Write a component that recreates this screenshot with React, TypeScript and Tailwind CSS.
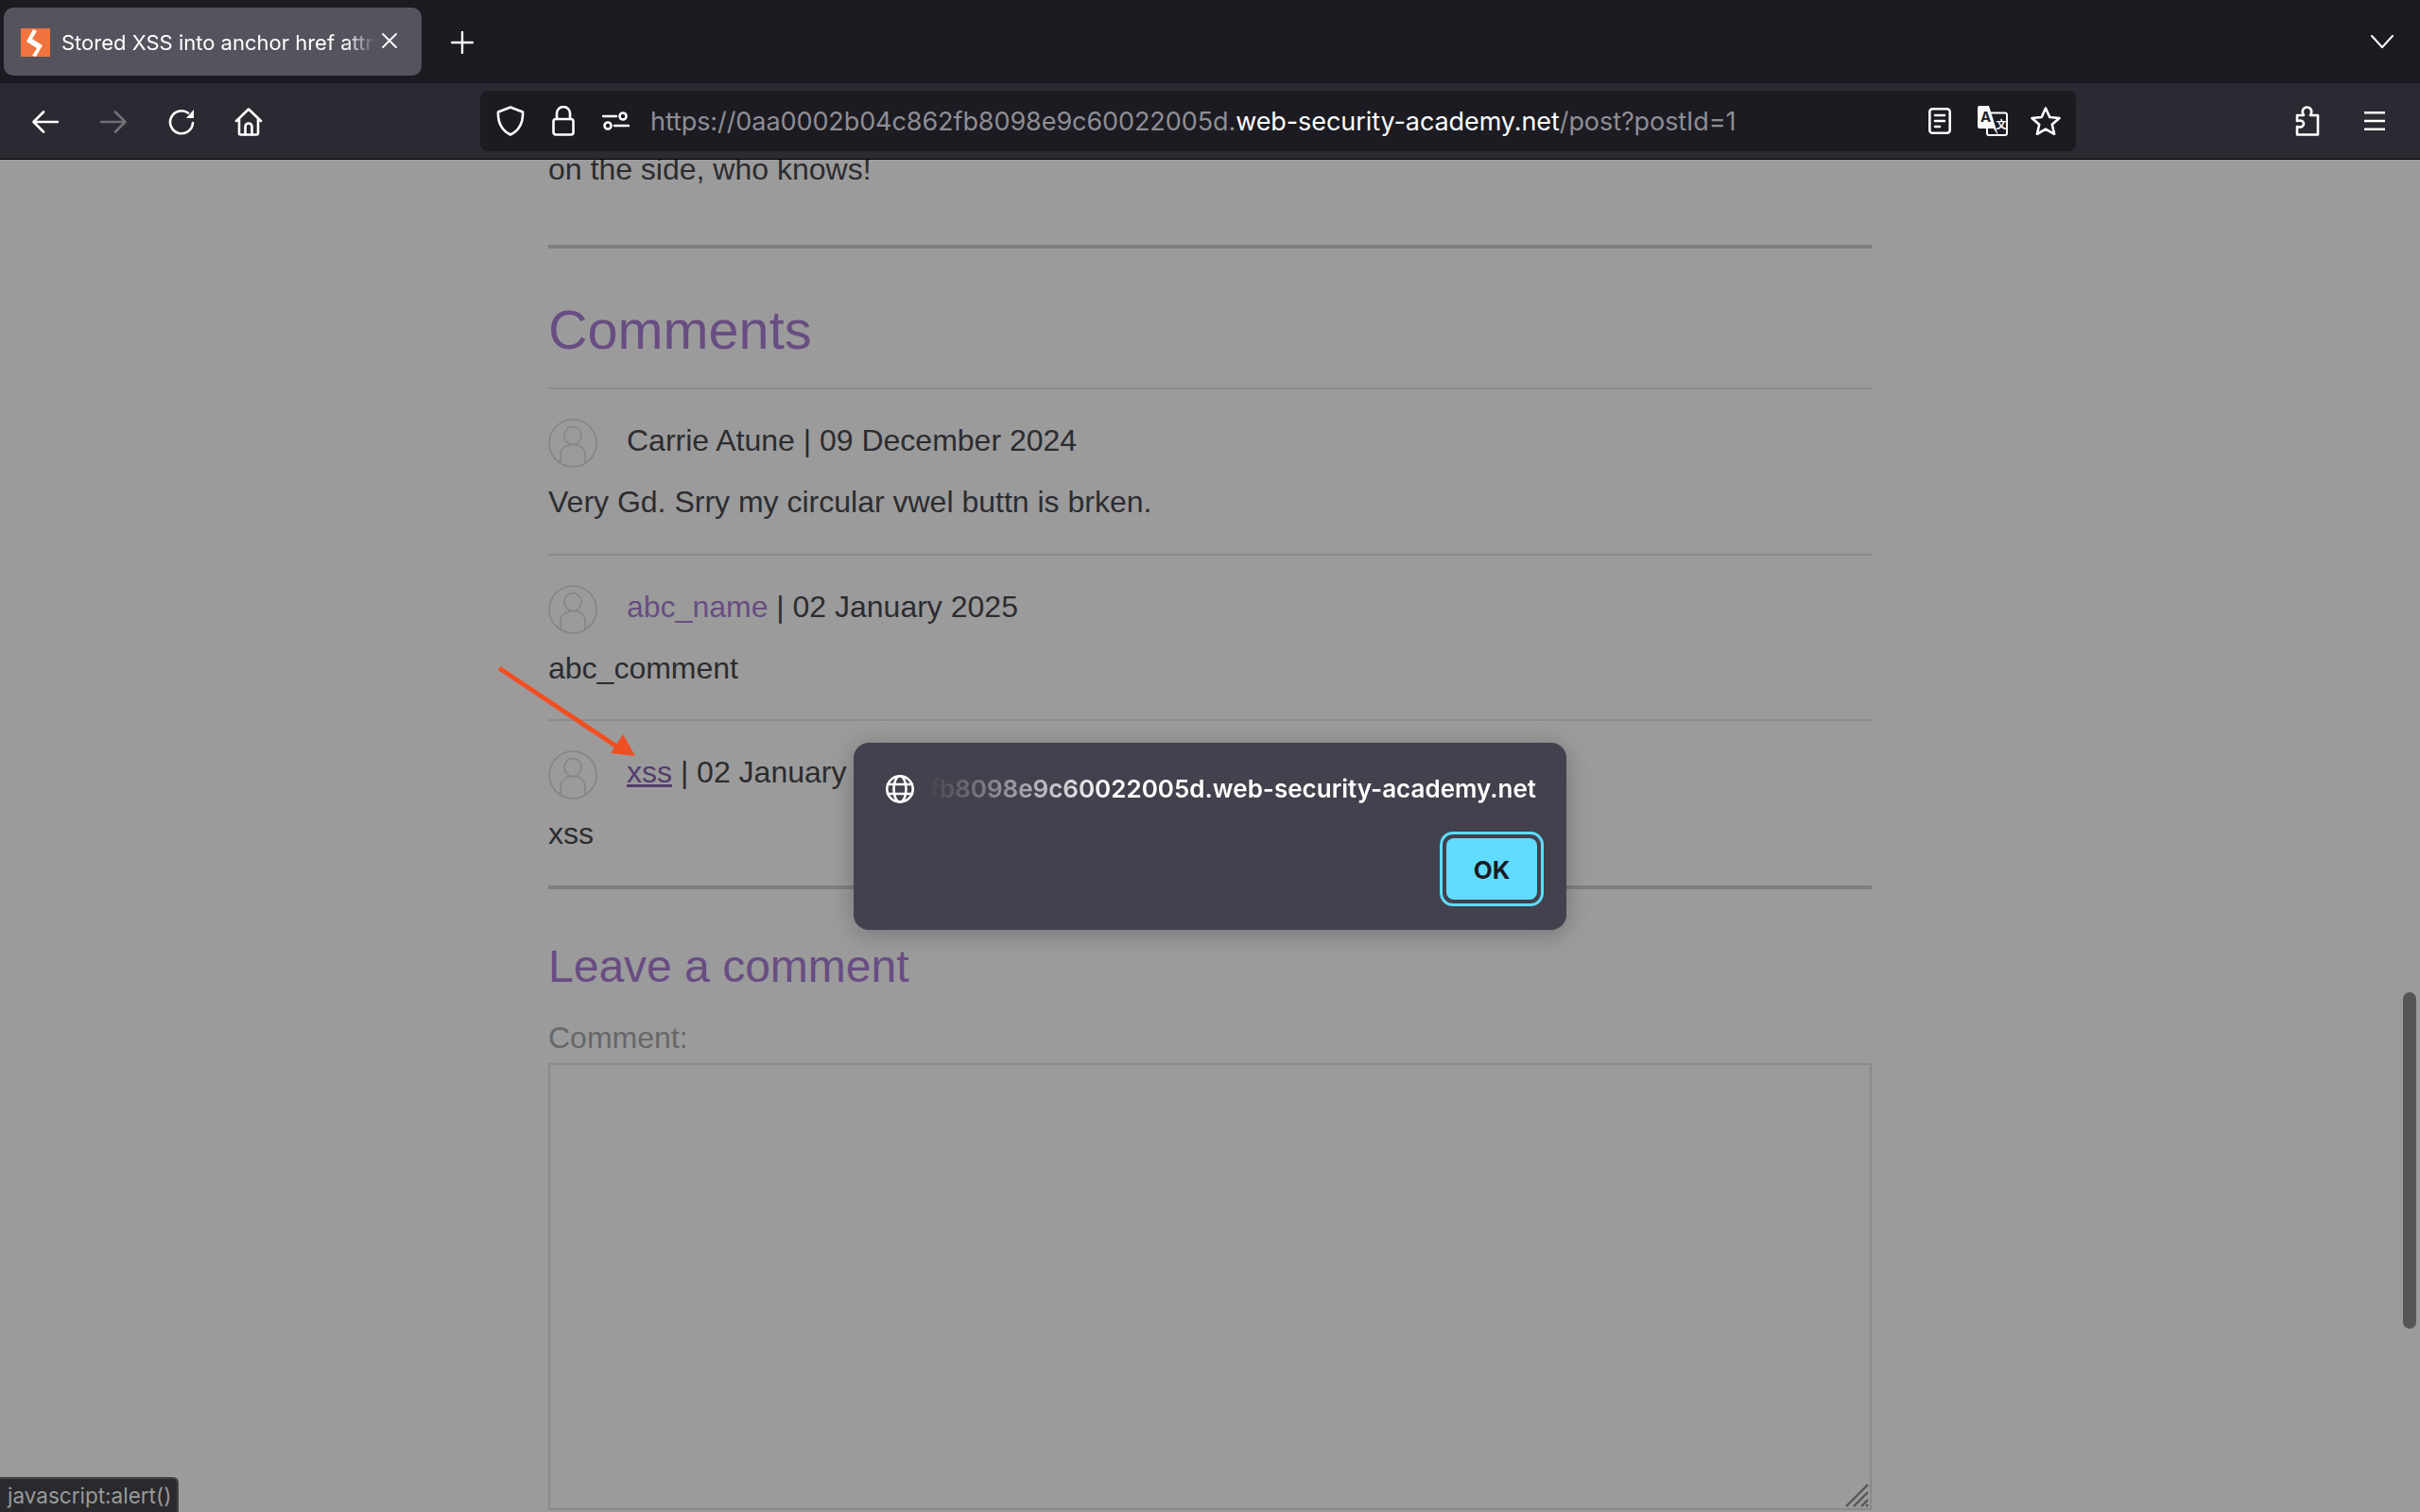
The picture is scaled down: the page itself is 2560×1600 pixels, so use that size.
import React from "react";

const ui = { fontFamily: "Inter, 'Noto Sans', sans-serif" };
const web = { fontFamily: "'Liberation Sans', Arial, sans-serif" };

function Ic({ w, h, vb, className, children }: { w: number; h: number; vb: string; className?: string; children: React.ReactNode }) {
  return (
    <svg width={w} height={h} viewBox={vb} fill="none" stroke="currentColor" strokeWidth={2.6} strokeLinecap="round" strokeLinejoin="round" className={"block shrink-0 " + (className ?? "")}>
      {children}
    </svg>
  );
}

function Avatar() {
  return (
    <svg width="52" height="52" viewBox="0 0 52 52" fill="none" stroke="#858586" strokeWidth="1.6" className="-mt-[2px] block shrink-0">
      <circle cx="26" cy="26" r="25" />
      <ellipse cx="26" cy="18" rx="9" ry="9.5" />
      <path d="M13 48V38c0-6 5-10.5 13-10.5S39 32 39 38v10" />
    </svg>
  );
}

function Comment({ name, date, body, heightClass }: { name: React.ReactNode; date: string; body: string; heightClass: string }) {
  return (
    <div className={heightClass + " pt-[33px]"}>
      <div className="flex h-[52px] items-start">
        <Avatar />
        <div className="ml-[31px] mt-[1px] leading-[40px]">
          {name}
          <span> | {date}</span>
        </div>
      </div>
      <div className="mt-[14px] leading-[40px]">{body}</div>
    </div>
  );
}

export default function App() {
  return (
    <div className="relative flex h-[1600px] w-[2560px] flex-col overflow-hidden bg-[#9b9b9c]">
      {/* Tab strip */}
      <div className="flex h-[88px] shrink-0 items-start bg-[#1c1b22] text-white" style={ui}>
        <div className="ml-[4px] mt-[8px] flex h-[72px] w-[442px] items-center rounded-[10px] bg-[#55545e] pl-[18px]">
          <svg width="31" height="30" viewBox="0 0 31 30" className="mt-[2px] block shrink-0">
            <rect width="31" height="30" fill="#f0743f" />
            <path d="M13 1l4 2-5 8 11 7-7 12-4-1 5-8L6 14z" fill="#fff" />
          </svg>
          <div className="ml-[12px] mt-[2px] w-[333px] overflow-hidden whitespace-nowrap text-[22px] [mask-image:linear-gradient(to_right,black_90%,transparent)]">
            Stored XSS into anchor href attribute
          </div>
          <Ic w={16} h={16} vb="0 0 16 16" className="ml-[6px] -mt-[2px]">
            <path d="M1 1l14 14M15 1 1 15" strokeWidth="1.8" />
          </Ic>
        </div>
        <Ic w={24} h={24} vb="0 0 24 24" className="ml-[31px] mt-[33px]">
          <path d="M12 1v22M1 12h22" strokeWidth="2.4" />
        </Ic>
        <Ic w={24} h={14} vb="0 0 24 14" className="ml-auto mr-[28px] mt-[37px]">
          <path d="M1 1l11 12L23 1" strokeWidth="2" />
        </Ic>
      </div>

      {/* Toolbar */}
      <div className="flex h-[81px] shrink-0 items-start border-b border-black bg-[#2b2a33] text-white" style={ui}>
        <Ic w={28} h={24} vb="0 0 28 24" className="ml-[34px] mt-[29px]">
          <path d="M27 12H2M12 1.5 1.5 12 12 22.5" />
        </Ic>
        <Ic w={28} h={24} vb="0 0 28 24" className="ml-[44px] mt-[29px] text-[#717076]">
          <path d="M1 12h25M16 1.5 26.5 12 16 22.5" />
        </Ic>
        <Ic w={28} h={28} vb="0 0 28 28" className="ml-[44px] mt-[27px]">
          <path d="M26 15a12 12 0 1 1-5-10.5" />
          <path d="M19 10h8V1z" fill="currentColor" stroke="none" />
        </Ic>
        <Ic w={30} h={30} vb="0 0 30 30" className="ml-[42px] mt-[26px]">
          <path d="M2 14 15 1.5 28 14M5 12v15a1.5 1.5 0 0 0 1.5 1.5h17A1.5 1.5 0 0 0 25 27V12" />
          <path d="M11.5 28.5V20a3.5 3.5 0 0 1 7 0v8.5" />
        </Ic>

        {/* URL bar */}
        <div className="ml-[230px] mt-[8px] flex h-[64px] w-[1688px] items-center rounded-[8px] bg-[#1c1b22]">
          <Ic w={30} h={32} vb="0 0 30 32" className="ml-[17px]">
            <path d="M15 1.5 28 6.5c.5 10-3 19-13 24C5 25.5 1.5 16.500 2 6.500z" />
          </Ic>
          <Ic w={24} h={32} vb="0 0 24 32" className="ml-[29px]">
            <path d="M5 14V8a7 7 0 0 1 14 0v6" />
            <rect x="1.500" y="14" width="21" height="16.500" rx="2.500" />
          </Ic>
          <Ic w={29} h={22} vb="0 0 29 22" className="ml-[29px]">
            <circle cx="22" cy="6" r="3.500" />
            <circle cx="6" cy="16" r="3.500" />
            <path d="M1 6h14M13 16h15" />
          </Ic>
          <div className="ml-[22px] mt-[3px] whitespace-nowrap text-[27px] tracking-[-0.08px] text-[#8f8e94]">
            https://0aa0002b04c862fb8098e9c60022005d.<span className="text-white">web-security-academy.net</span>/post?postId=1
          </div>
          <div className="ml-auto" />
          <Ic w={24} h={28} vb="0 0 24 28" className="mr-[28px]">
            <rect x="1.300" y="1.300" width="21.400" height="25.400" rx="3" />
            <path d="M7 8h10M7 14h10M7 20h5" />
          </Ic>
          <svg width="32" height="32" viewBox="0 0 32 32" className="mr-[24px] block shrink-0">
            <rect x="10" y="7.500" width="21" height="23.500" rx="2" fill="none" stroke="#fff" strokeWidth="2" />
            <path d="M2 0h10l10 32-5-8H2a2 2 0 0 1-2-2V2a2 2 0 0 1 2-2z" fill="#fbfbfe" />
            <text x="3" y="17" fontSize="15" fontWeight="700" fill="#1c1b22" style={ui}>A</text>
            <text x="19.500" y="24" fontSize="11" fontWeight="700" fill="#fff" style={{ fontFamily: "'Noto Sans CJK SC', sans-serif" }}>文</text>
          </svg>
          <Ic w={32} h={30} vb="0 0 32 30" className="mr-[16px]">
            <path d="M16 1.500 20.300 11l10.200 1-7.700 6.800 2.300 10L16 23.600 7 28.800l2.200-10L1.500 12l10.200-1z" />
          </Ic>
        </div>

        <Ic w={26} h={32} vb="0 0 26 32" className="ml-[232px] mt-[24px]">
          <path d="M2 30.500V22c5 1.500 7-1 7-3s-2-4.500-7-3V10h7c-3-5 0-8.500 3.500-8.500S19 5 16 10h8v20.500z" />
        </Ic>
        <Ic w={24} h={20} vb="0 0 24 20" className="ml-[46px] mt-[30px]">
          <path d="M1 1.300h22M1 10h22M1 18.700h22" strokeLinecap="butt" />
        </Ic>
      </div>

      {/* Page */}
      <main className="relative min-h-0 flex-1 overflow-hidden text-[32px] text-[#2c2c2f]" style={web}>
        <div className="ml-[580px] w-[1400px]">
          <p className="-mt-[10px] leading-[40px]">on the side, who knows!</p>
          <div className="mt-[60px] h-[4px] bg-[#7f7f82]" />
          <h2 className="mt-[53px] text-[57.6px] leading-[66px] text-[#684d82]">Comments</h2>
          <div className="mt-[28px] h-[2px] bg-[#8b8b8d]" />
          <Comment heightClass="h-[174px]" name={<span>Carrie Atune</span>} date="09 December 2024" body="Very Gd. Srry my circular vwel buttn is brken." />
          <div className="h-[2px] bg-[#8b8b8d]" />
          <Comment heightClass="h-[173px]" name={<span className="text-[#684d82]">abc_name</span>} date="02 January 2025" body="abc_comment" />
          <div className="h-[2px] bg-[#8b8b8d]" />
          <Comment heightClass="h-[175px]" name={<span className="text-[#543c6c] underline">xss</span>} date="02 January 2025" body="xss" />
          <div className="-mt-[1px] h-[4px] bg-[#7f7f82]" />
          <h3 className="mt-[54px] text-[48px] leading-[56px] text-[#684d82]">Leave a comment</h3>
          <div className="mt-[27px] leading-[40px] text-[#676769]">Comment:</div>
          <div className="relative mt-[7px] h-[473px] border-2 border-[#8a8a8c]">
            <svg width="26" height="26" viewBox="0 0 26 26" stroke="#555557" strokeWidth="2.4" className="absolute bottom-0 right-0 block">
              <path d="M1 24 24 1M9 24 24 9M17 24l7-7M22 24l2-2" />
            </svg>
          </div>
        </div>

        {/* Annotation arrow */}
        <svg width="160" height="110" viewBox="0 0 160 110" className="absolute left-[520px] top-[530px] block">
          <path d="M8 8 134 92" stroke="#f04e23" strokeWidth="5" />
          <path d="M152 101 126 98 139 78z" fill="#f04e23" />
        </svg>
      </main>

      {/* Alert dialog */}
      <div className="absolute left-[903px] top-[786px] h-[198px] w-[754px] rounded-[16px] bg-[#42414d] text-white shadow-[0_4px_24px_rgba(0,0,0,0.25)]" style={ui}>
        <div className="flex items-center pl-[34px] pt-[34px]">
          <Ic w={30} h={30} vb="0 0 30 30">
            <circle cx="15" cy="15" r="13.700" />
            <ellipse cx="15" cy="15" rx="6.500" ry="13.700" />
            <path d="M2 10h26M2 20h26" />
          </Ic>
          <div className="ml-[14px] w-[644px] overflow-hidden whitespace-nowrap text-[26px] font-semibold leading-[30px] [mask-image:linear-gradient(to_right,transparent,black_30%)]">
            <span className="float-right">2fb8098e9c60022005d.web-security-academy.net</span>
          </div>
        </div>
        <div className="absolute left-[620px] top-[94px] flex h-[79px] w-[110px] items-center justify-center rounded-[14px] border-[3px] border-[#5fdcff] p-[4px]">
          <div className="flex h-full w-full items-center justify-center rounded-[8px] bg-[#5fdcff] pt-[2px] text-[26px] font-bold text-[#1c1b22]">OK</div>
        </div>
      </div>

      {/* Scrollbar thumb */}
      <div className="absolute left-[2542px] top-[1050px] h-[356px] w-[14px] rounded-full bg-[#555557]" />

      {/* Status panel */}
      <div className="absolute bottom-0 left-0 flex h-[37px] w-[189px] items-center rounded-tr-[6px] border-r-2 border-t-2 border-[#434346] bg-[#2a2a2e] pl-[8px] text-[22.5px] text-[#9a9a9c]" style={ui}>
        javascript:alert()
      </div>
    </div>
  );
}
